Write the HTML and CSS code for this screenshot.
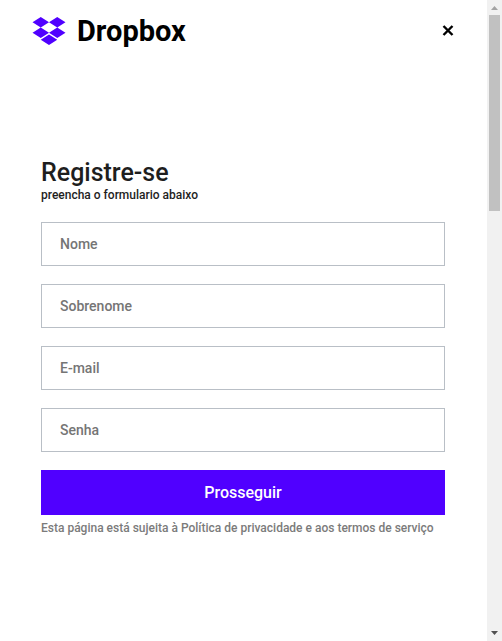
FILE: index.html
```html
<!DOCTYPE html>
<html lang="pt-BR">
<head>
<meta charset="utf-8">
<meta name="viewport" content="width=device-width, initial-scale=1">
<title>Dropbox</title>
<link rel="stylesheet" href="styles.css">
</head>
<body>
<div class="page">
  <header class="header">
    <a class="brand" href="#">
      <svg class="brand-mark" viewBox="0 1.8 24 20.4" aria-hidden="true">
        <path d="M6 1.807 0 5.629l6 3.822 6-3.822zM18 1.807l-6 3.822 6 3.822 6-3.822zM0 13.274l6 3.822 6-3.822-6-3.822zM18 9.452l-6 3.822 6 3.822 6-3.822zM6 18.371l6 3.822 6-3.822-6-3.822z"/>
      </svg>
      <span class="brand-name">Dropbox</span>
    </a>
    <button class="close" type="button" aria-label="Fechar">
      <svg class="close-icon" viewBox="0 0 14 14" aria-hidden="true"><path d="M2.5 2l9 9M11.5 2l-9 9"/></svg>
    </button>
  </header>
  <main class="content">
    <form class="form">
      <div class="intro">
        <h1 class="title">Registre-se</h1>
        <p class="subtitle">preencha o formulario abaixo</p>
      </div>
      <input class="field" type="text" placeholder="Nome" aria-label="Nome">
      <input class="field" type="text" placeholder="Sobrenome" aria-label="Sobrenome">
      <input class="field" type="email" placeholder="E-mail" aria-label="E-mail">
      <input class="field" type="password" placeholder="Senha" aria-label="Senha">
      <div class="actions">
        <button class="submit" type="submit">Prosseguir</button>
        <p class="terms">Esta página está sujeita à Política de privacidade e aos termos de serviço</p>
      </div>
    </form>
  </main>
</div>
<div class="scrollbar" aria-hidden="true">
  <svg class="arrow arrow-up" viewBox="0 0 15 15"><path d="M4 10h7L7.5 6z"/></svg>
  <div class="track"><div class="thumb"></div></div>
  <svg class="arrow arrow-down" viewBox="0 0 15 15"><path d="M4 5h7L7.5 9z"/></svg>
</div>
</body>
</html>
```
FILE: styles.css
```css
* {
  box-sizing: border-box;
  margin: 0;
  padding: 0;
}

body {
  display: flex;
  height: 100vh;
  overflow: hidden;
  background: #fff;
  color: #1e1e1e;
  font-family: Roboto, sans-serif;
  font-weight: 500;
}

.page {
  flex: 1;
  min-width: 0;
}

.header {
  display: flex;
  align-items: center;
  justify-content: space-between;
  padding: 12px 32px 0;
}

.brand {
  display: flex;
  align-items: center;
  gap: 11px;
  color: #000;
  text-decoration: none;
}

.brand-mark {
  width: 34px;
  height: 28px;
  fill: #5000ff;
}

.brand-name {
  font-size: 29px;
  font-weight: 700;
  line-height: 38px;
}

.close {
  display: flex;
  border: 0;
  background: none;
  cursor: pointer;
}

.close-icon {
  width: 14px;
  height: 14px;
  fill: none;
  stroke: #000;
  stroke-width: 2.4;
}

.content {
  padding: 108px 42px 0 41px;
}

.form {
  display: flex;
  flex-direction: column;
  gap: 18px;
}

.title {
  font-size: 25px;
  font-weight: 500;
  line-height: 30px;
}

.subtitle {
  padding-bottom: 2px;
  font-size: 12px;
  line-height: 14px;
}

.field {
  width: 100%;
  height: 44px;
  padding: 0 18px;
  border: 1px solid #b9bfc6;
  background: #fff;
  font: inherit;
  font-size: 14px;
}

.field::placeholder {
  color: #757575;
}

.submit {
  display: block;
  width: 100%;
  height: 45px;
  border: 0;
  background: #5000ff;
  color: #fff;
  font: inherit;
  font-size: 16px;
  cursor: pointer;
}

.terms {
  padding-top: 5px;
  color: #7b7b7b;
  font-size: 12px;
  line-height: 16px;
}

.scrollbar {
  display: flex;
  flex-direction: column;
  width: 15px;
  background: #f1f1f1;
}

.arrow {
  width: 15px;
  height: 15px;
}

.arrow-up {
  fill: #a3a3a3;
}

.arrow-down {
  fill: #505050;
}

.track {
  flex: 1;
  padding: 0 2px;
}

.thumb {
  height: 32%;
  background: #c1c1c1;
}
```
